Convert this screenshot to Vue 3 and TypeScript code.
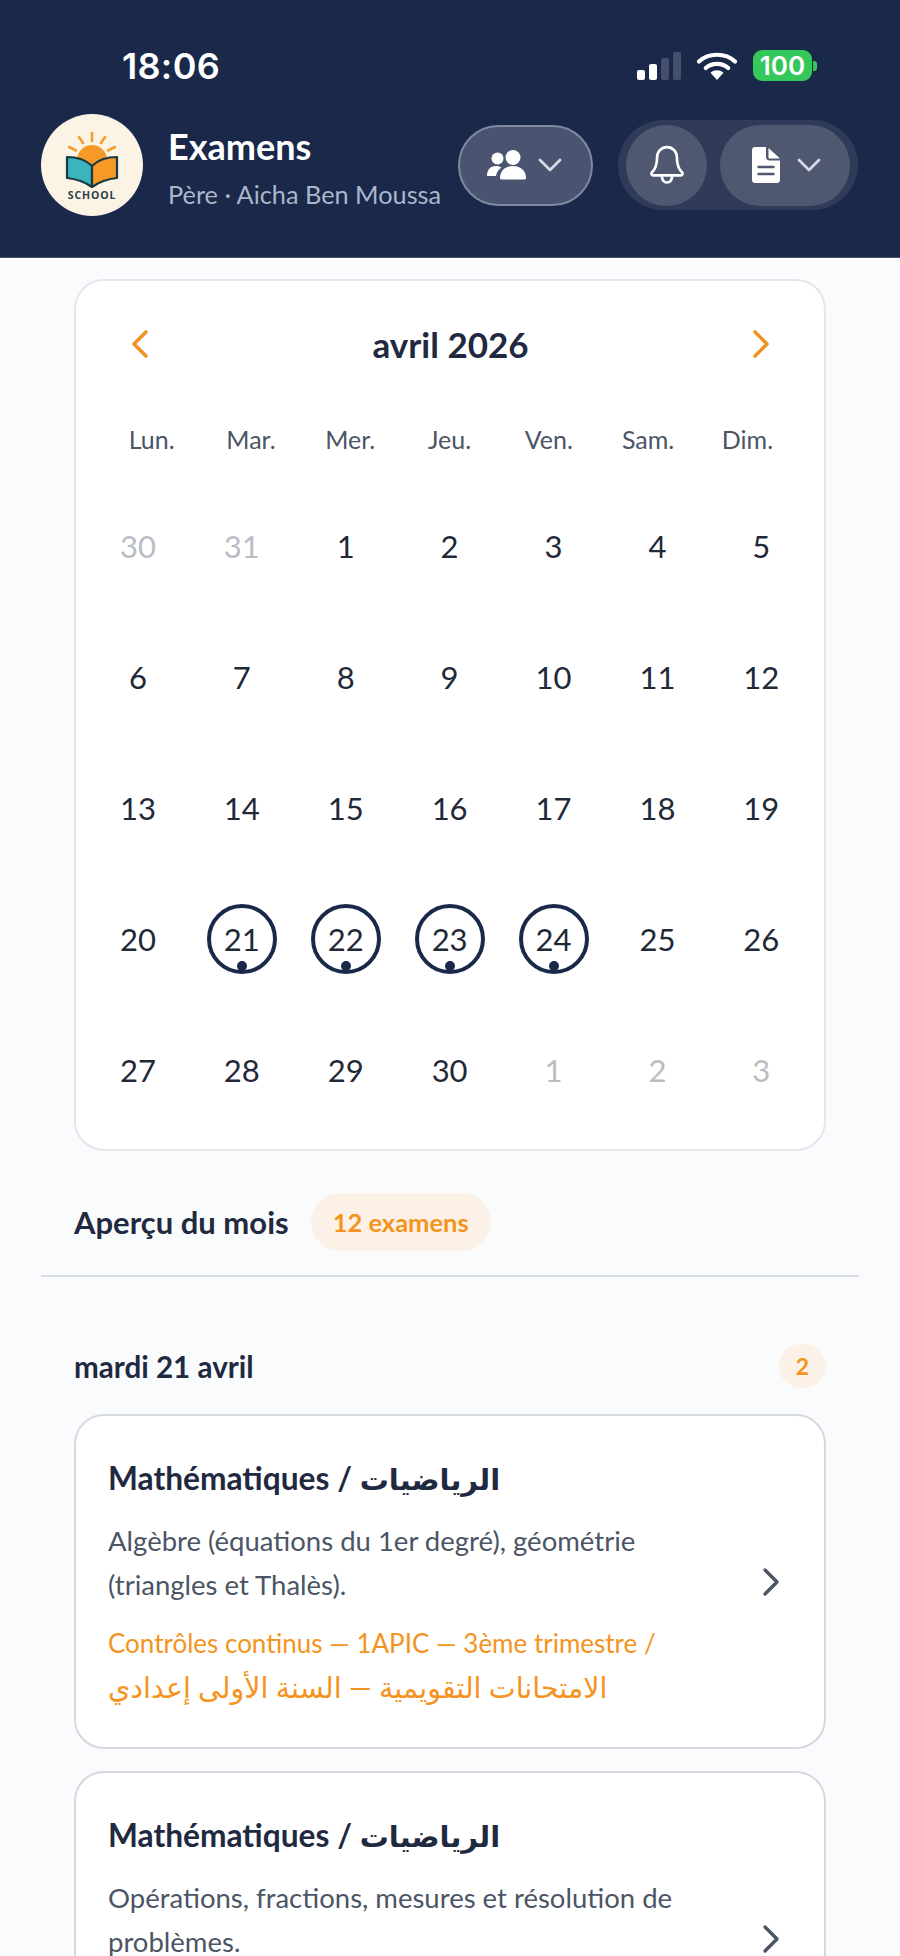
<template>
  <div class="screen">
    <header class="header">
      <div class="status">
        <span class="time">18:06</span>
        <div class="status-icons">
          <svg class="signal" width="44" height="28" viewBox="0 0 44 28">
            <rect x="0" y="18" width="8" height="10" rx="2" fill="#fff" />
            <rect x="12" y="12" width="8" height="16" rx="2" fill="#fff" />
            <rect x="24" y="6" width="8" height="22" rx="2" fill="#454f6b" />
            <rect x="36" y="0" width="8" height="28" rx="2" fill="#454f6b" />
          </svg>
          <svg class="wifi" width="40" height="30" viewBox="0 0 40 30" fill="none">
            <path d="M2 10.5C11.5 1.5 28.5 1.5 38 10.5" stroke="#fff" stroke-width="4.2" stroke-linecap="round" />
            <path d="M8.8 17C14.5 11.5 25.5 11.5 31.2 17" stroke="#fff" stroke-width="4.2" stroke-linecap="round" />
            <path d="M13.5 21.8C17 18.5 23 18.5 26.5 21.8L20 29Z" fill="#fff" />
          </svg>
          <div class="battery">
            <span class="battery-level">100</span>
            <span class="battery-tip"></span>
          </div>
        </div>
      </div>

      <div class="topbar">
        <svg class="logo" width="102" height="102" viewBox="0 0 102 102">
          <circle cx="51" cy="51" r="51" fill="#fbf3e3" />
          <g stroke="#f59e2c" stroke-width="2.6" stroke-linecap="round">
            <path d="M51 19v8M38 23l4 6M64 23l-4 6M28 33l7 3.5M74 33l-7 3.500" />
          </g>
          <circle cx="51" cy="46" r="15" fill="#f59a26" />
          <path d="M26 43c10 0 19 3 25 9v21c-7-5-15-8-25-9Z" fill="#3bb5bd" stroke="#173a44" stroke-width="2.2" stroke-linejoin="round" />
          <path d="M76 43c-10 0-19 3-25 9v21c7-5 15-8 25-9Z" fill="#f79a25" stroke="#173a44" stroke-width="2.2" stroke-linejoin="round" />
          <text x="51" y="85" class="logo-text" text-anchor="middle">SCHOOL</text>
        </svg>
        <div class="titles">
          <div class="title">Examens</div>
          <div class="subtitle">Père · Aicha Ben Moussa</div>
        </div>
        <button class="pill pill-child">
          <svg width="40" height="30" viewBox="0 0 40 30" fill="#fff">
            <circle cx="10.5" cy="8.5" r="6" />
            <circle cx="26" cy="7.5" r="7.5" />
            <path d="M0 26c0-6 3-10 9-10 2.500 0 4 .6 5.500 1.500-3 2.200-5 5-5.500 8.500Z" />
            <path d="M13 28c0-7 5-12 13-12s13 5 13 12c0 1-1 1.500-2 1.500H15c-1 0-2-.5-2-1.500Z" />
          </svg>
          <svg class="chev" width="24" height="14" viewBox="0 0 24 14" fill="none">
            <path d="M2 2l10 10L22 2" />
          </svg>
        </button>
        <div class="action-group">
          <button class="pill pill-round">
            <svg width="34" height="40" viewBox="0 0 36 42" fill="none" stroke="#fff" stroke-width="2.800" stroke-linejoin="round">
              <path d="M18 2c-6 0-10.500 5-10.500 11 0 8-2 12.500-5.500 16-1 1-.5 3 1.500 3h29c2 0 2.500-2 1.500-3-3.500-3.500-5.500-8-5.500-16C28.500 7 24 2 18 2Z" />
              <path d="M12.500 33c.5 4 2.500 6.500 5.500 6.500s5-2.500 5.500-6.500" />
            </svg>
          </button>
          <button class="pill pill-doc">
            <svg width="28" height="36" viewBox="0 0 28 36">
              <path d="M3 0h11v10c0 2 1.500 3.500 3.500 3.500H28V33c0 1.800-1.300 3-3 3H3c-1.700 0-3-1.200-3-3V3c0-1.800 1.300-3 3-3Z" fill="#fff" />
              <path d="M16.500 1 28 11.500H17.500c-.6 0-1-.4-1-1Z" fill="#fff" />
              <path d="M6.500 20h15M6.500 27h15" stroke="#4f5870" stroke-width="2.400" stroke-linecap="round" />
            </svg>
            <svg class="chev" width="24" height="14" viewBox="0 0 24 14" fill="none">
              <path d="M2 2l10 10L22 2" />
            </svg>
          </button>
        </div>
      </div>
    </header>

    <main class="content">
      <section class="calendar">
        <div class="cal-head">
          <svg width="20" height="30" viewBox="0 0 20 30" fill="none" class="nav">
            <path d="M16 3 4 15l12 12" />
          </svg>
          <span class="month">avril 2026</span>
          <svg width="20" height="30" viewBox="0 0 20 30" fill="none" class="nav">
            <path d="M4 3l12 12L4 27" />
          </svg>
        </div>
        <div class="weekdays">
          <span v-for="day in weekdays" :key="day">{{ day }}</span>
        </div>
        <div class="days">
          <div v-for="(cell, i) in cells" :key="i" class="cell">
            <span class="day" :class="{ muted: cell.muted, exam: cell.exam }">
              {{ cell.label }}
              <i v-if="cell.exam" class="dot"></i>
            </span>
          </div>
        </div>
      </section>

      <div class="overview">
        <span class="overview-title">Aperçu du mois</span>
        <span class="count">12 examens</span>
      </div>
    </main>

    <div class="divider"></div>

    <section class="list">
      <div class="list-head">
        <span class="list-date">mardi 21 avril</span>
        <span class="list-badge">2</span>
      </div>
      <article v-for="exam in exams" :key="exam.desc" class="exam-card">
        <div class="exam-body">
          <h3 class="exam-title">Mathématiques / <span class="title-ar">الرياضيات</span></h3>
          <p class="exam-desc">{{ exam.desc }}</p>
          <p class="exam-meta">Contrôles continus — 1APIC — 3ème trimestre /<br /><span class="meta-ar">الامتحانات التقويمية — السنة الأولى إعدادي</span></p>
        </div>
        <svg class="exam-chev" width="20" height="30" viewBox="0 0 20 30" fill="none">
          <path d="M4 3l12 12L4 27" />
        </svg>
      </article>
    </section>
  </div>
</template>

<script setup lang="ts">
interface Cell {
  label: number;
  muted?: boolean;
  exam?: boolean;
}

const weekdays = ['Lun.', 'Mar.', 'Mer.', 'Jeu.', 'Ven.', 'Sam.', 'Dim.'];

const examDays = [21, 22, 23, 24];
const cells: Cell[] = [
  { label: 30, muted: true },
  { label: 31, muted: true },
];
for (let d = 1; d <= 30; d++) {
  cells.push({ label: d, exam: examDays.includes(d) });
}
for (let d = 1; d <= 3; d++) {
  cells.push({ label: d, muted: true });
}

const exams = [
  { desc: 'Algèbre (équations du 1er degré), géométrie (triangles et Thalès).' },
  { desc: 'Opérations, fractions, mesures et résolution de problèmes.' },
];
</script>

<style scoped>
.screen {
  width: 900px;
  height: 1956px;
  overflow: hidden;
  background: #f9fbfd;
  color: #1f2937;
  font-family: Lato, "DejaVu Sans", sans-serif;
}

.header {
  height: 258px;
  box-sizing: border-box;
  background: #1a2849;
  border-bottom: 1px solid #46536e;
  padding: 0 42px 0 41px;
}

.status {
  height: 114px;
  display: flex;
  align-items: flex-start;
  justify-content: space-between;
  padding: 47px 41px 0 81px;
  box-sizing: border-box;
}

.time {
  font-family: Inter, sans-serif;
  font-size: 36px;
  line-height: 38px;
  font-weight: 600;
  letter-spacing: 0.3px;
  color: #fff;
}

.status-icons {
  display: flex;
  align-items: center;
  gap: 16px;
  margin-top: 3px;
}

.battery {
  display: flex;
  align-items: center;
  gap: 1px;
}

.battery-level {
  width: 59px;
  height: 31px;
  border-radius: 9px;
  background: #34c759;
  color: #fff;
  font-family: Inter, sans-serif;
  font-size: 26px;
  font-weight: 600;
  line-height: 31px;
  text-align: center;
}

.battery-tip {
  width: 4px;
  height: 10px;
  border-radius: 0 3px 3px 0;
  background: #34c759;
}

.topbar {
  display: flex;
  align-items: center;
  height: 102px;
}

.logo {
  flex: none;
}

.logo-text {
  font-family: "Open Sans", sans-serif;
  font-size: 10.5px;
  font-weight: 700;
  letter-spacing: 0.9px;
  fill: #28414a;
}

.titles {
  margin-left: 26px;
  margin-top: 2px;
  flex: 1;
  min-width: 0;
  white-space: nowrap;
}

.title {
  margin-left: -1px;
  font-size: 36px;
  font-weight: 700;
  line-height: 44px;
  color: #fff;
}

.subtitle {
  margin-top: 11px;
  margin-left: -1px;
  font-size: 25.3px;
  line-height: 30px;
  color: #a9b6cc;
}

.pill {
  border: 0;
  padding: 0;
  height: 81px;
  background: #4f5870;
  display: flex;
  align-items: center;
  justify-content: center;
}

.pill-child {
  width: 135px;
  border: 2px solid #7f899f;
  box-sizing: border-box;
  border-radius: 41px;
  padding-right: 3px;
  gap: 11px;
  background: #4a5470;
  flex: none;
}

.action-group {
  margin-left: 25px;
  width: 240px;
  height: 90px;
  box-sizing: border-box;
  border-radius: 45px;
  background: #2f3b59;
  padding: 0 8px;
  display: flex;
  align-items: center;
  gap: 13px;
  flex: none;
}

.pill-round {
  width: 81px;
  border-radius: 50%;
  flex: none;
}

.pill-doc {
  width: 130px;
  box-sizing: border-box;
  border-radius: 41px;
  padding-left: 3px;
  gap: 17px;
  flex: none;
}

.chev path {
  stroke: #d5dae4;
  stroke-width: 2.800;
  stroke-linecap: round;
  stroke-linejoin: round;
}

.content {
  padding: 21px 74px 0;
}

.calendar {
  height: 872px;
  box-sizing: border-box;
  background: #fff;
  border: 2px solid #e3e6eb;
  border-radius: 30px;
  padding: 0 40px 0 26px;
}

.cal-head {
  height: 126px;
  padding: 0 13px 0 28px;
  display: flex;
  align-items: center;
  justify-content: space-between;
}

.nav path {
  stroke: #ee9426;
  stroke-width: 3.600;
  stroke-linecap: round;
  stroke-linejoin: round;
}

.month {
  font-size: 35px;
  font-weight: 700;
  color: #1f2a40;
}

.weekdays {
  display: grid;
  grid-template-columns: repeat(7, 99.3px);
  height: 30px;
  margin-top: 17px;
  font-size: 25px;
  line-height: 30px;
  color: #4b5565;
  text-align: center;
}

.days {
  margin-top: 26px;
  margin-left: -16px;
  display: grid;
  grid-template-columns: repeat(7, 103.900px);
  grid-auto-rows: 131px;
}

.cell {
  display: flex;
  align-items: center;
  justify-content: center;
}

.day {
  position: relative;
  width: 70px;
  height: 70px;
  box-sizing: border-box;
  display: flex;
  align-items: center;
  justify-content: center;
  border-radius: 50%;
  font-size: 31px;
  color: #1f2937;
}

.day.muted {
  color: #b9bdc4;
}

.day.exam {
  border: 4px solid #1a2849;
}

.dot {
  position: absolute;
  bottom: -1px;
  left: 50%;
  width: 10px;
  height: 10px;
  margin-left: -5px;
  border-radius: 50%;
  background: #1a2849;
}

.overview {
  margin-top: 42px;
  height: 58px;
  display: flex;
  align-items: center;
  gap: 22px;
}

.overview-title {
  font-size: 31px;
  font-weight: 700;
  color: #1f2a40;
}

.count {
  height: 58px;
  padding: 0 22px;
  border-radius: 29px;
  background: #fcf1e6;
  color: #f59320;
  font-size: 25.5px;
  font-weight: 700;
  line-height: 58px;
}

.divider {
  margin: 24px 41px 0;
  height: 2px;
  background: #d9dce1;
}

.list {
  padding: 65px 74px 0;
}

.list-head {
  height: 48px;
  display: flex;
  align-items: center;
  justify-content: space-between;
}

.list-date {
  font-size: 29.6px;
  font-weight: 700;
  color: #1f2a40;
}

.list-badge {
  width: 47px;
  height: 44px;
  border-radius: 22px;
  background: #fcf1e6;
  color: #f59320;
  font-size: 23px;
  font-weight: 700;
  line-height: 44px;
  text-align: center;
}

.exam-card {
  margin-top: 24px;
  height: 335px;
  box-sizing: border-box;
  background: #fff;
  border: 2px solid #d5d9df;
  border-radius: 30px;
  padding: 0 43px 0 32px;
  display: flex;
  align-items: center;
  gap: 22px;
}

.exam-card + .exam-card {
  margin-top: 22px;
}

.exam-body {
  flex: 1;
  min-width: 0;
}

.exam-title {
  margin: 0;
  padding-top: 2px;
  font-size: 31.7px;
  font-weight: 700;
  line-height: 44px;
  color: #1f2a40;
}

.title-ar {
  font-size: 29px;
  font-weight: 600;
}

.exam-desc {
  margin: 18px 0 0;
  font-size: 27.5px;
  line-height: 44px;
  color: #4b5565;
}

.exam-meta {
  margin: 14px 0 0;
  font-size: 26px;
  line-height: 44px;
  color: #f59320;
}

.meta-ar {
  font-size: 28.500px;
}

.exam-chev path {
  stroke: #4b5565;
  stroke-width: 3.400;
  stroke-linecap: round;
  stroke-linejoin: round;
}
</style>

<style>
html,
body {
  margin: 0;
  background: #f9fbfd;
}
</style>
